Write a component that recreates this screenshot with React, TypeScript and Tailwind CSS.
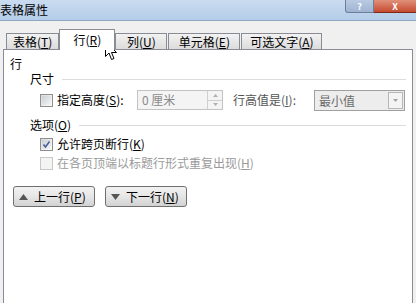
const F = "font-['Noto_Sans_CJK_SC','Noto_Sans',sans-serif]";

function U({ c }: { c: string }) {
  return (
    <span>
      (<span className="underline underline-offset-1">{c}</span>)
    </span>
  );
}

function Tab({ label, k, active }: { label: string; k: string; active?: boolean }) {
  if (active) {
    return (
      <div className="relative z-10 -mb-px flex h-[21px] w-[56px] items-center justify-center border border-b-0 border-[#898c95] bg-white text-[12px] text-black">
        {label}
        <U c={k} />
      </div>
    );
  }
  return (
    <div className="flex h-[16px] items-center justify-center border border-b-0 border-[#898c95] bg-gradient-to-b from-[#f2f2f2] to-[#dcdcdc] px-[6px] text-[12px] text-black">
      {label}
      <U c={k} />
    </div>
  );
}

function Section({ label, k }: { label: string; k?: string }) {
  return (
    <div className="flex items-center pl-[26px] text-[12px] leading-[14px] text-black">
      <span>
        {label}
        {k && <U c={k} />}
      </span>
      <div className="ml-[8px] h-px flex-1 bg-[#dcdcdc]" />
    </div>
  );
}

function Check({ checked, disabled }: { checked?: boolean; disabled?: boolean }) {
  return (
    <div
      className={`flex h-[13px] w-[13px] items-center justify-center border ${
        disabled ? "border-[#c8c8c8] bg-[#f4f4f4]" : "border-[#8e8f8f] bg-gradient-to-br from-[#dcdcdc] to-[#fbfbfb]"
      }`}
    >
      <div className={`flex h-[9px] w-[9px] items-center justify-center ${disabled ? "" : "bg-gradient-to-br from-[#cbcfd5] to-[#f6f6f6]"}`}>
        {checked && (
          <svg width="9" height="9" viewBox="0 0 9 9">
            <path d="M1.5 4.5 L3.5 7 L7.5 1.5" fill="none" stroke="#4a5f97" strokeWidth="1.6" />
          </svg>
        )}
      </div>
    </div>
  );
}

function NavButton({ up, label, k }: { up?: boolean; label: string; k: string }) {
  return (
    <div className="flex h-[21px] w-[82px] items-center rounded-[3px] border border-[#707070] bg-gradient-to-b from-[#f2f2f2] via-[#e6e6e6] to-[#d2d2d2] pl-[5px] text-[12px] text-black">
      <svg width="9" height="6" viewBox="0 0 9 6" className="mr-[6px]">
        {up ? <path d="M0 6 L4.5 0 L9 6 Z" fill="#555" /> : <path d="M0 0 L4.5 6 L9 0 Z" fill="#555" />}
      </svg>
      {label}
      <U c={k} />
    </div>
  );
}

export default function App() {
  return (
    <div className={`relative h-[303px] w-[416px] overflow-hidden bg-[#f0f0f0] ${F}`}>
      {/* Title bar */}
      <div className="flex h-[21px] items-center justify-between border-b border-[#8ea6c4] bg-gradient-to-b from-[#c9dbef] to-[#b5cde9]">
        <span className="text-[12px] leading-none text-black">表格属性</span>
        <div className="flex self-start">
          <div className="flex h-[13px] w-[29px] items-center justify-center rounded-bl-[3px] border border-t-0 border-[#6d7f99] bg-gradient-to-b from-[#b9cbe2] to-[#9fb4d2] text-[9px] font-bold leading-none text-white">
            ?
          </div>
          <div className="flex h-[13px] w-[42px] items-center justify-center border-b border-[#7a2a1a] bg-gradient-to-b from-[#e0907a] to-[#c44a2e] text-[9px] font-bold leading-none text-white">
            X
          </div>
        </div>
      </div>

      {/* Tabs */}
      <div className="mt-[7px] flex h-[21px] items-end pl-[6px]">
        <Tab label="表格" k="T" />
        <Tab label="行" k="R" active />
        <div className="flex">
          <div className="w-[52px]">
            <Tab label="列" k="U" />
          </div>
          <div className="ml-px w-[72px]">
            <Tab label="单元格" k="E" />
          </div>
          <div className="ml-px w-[81px]">
            <Tab label="可选文字" k="A" />
          </div>
        </div>
      </div>

      {/* Panel */}
      <div className="ml-[3px] h-[260px] w-[410px] border border-[#898c95] bg-white pr-[6px] pt-[7px]">
        <div className="pl-[6px] text-[12px] leading-[14px] text-black">行</div>

        <div className="mt-[1px]">
          <Section label="尺寸" />
        </div>

        <div className="mt-[4px] flex h-[20px] items-center pl-[36px] text-[12px] text-black">
          <Check />
          <span className="ml-[4px] w-[80px]">
            指定高度<U c="S" />:
          </span>
          <div className="flex h-[20px] w-[86px] border border-[#c3c3c3] bg-[#f4f4f4]">
            <span className="flex-1 pl-[4px] leading-[18px] text-[#8a8a8a]">0 厘米</span>
            <div className="flex w-[15px] flex-col border-l border-[#d0d0d0]">
              <div className="flex flex-1 items-center justify-center border-b border-[#d0d0d0]">
                <svg width="5" height="3" viewBox="0 0 5 3">
                  <path d="M0 3 L2.5 0 L5 3 Z" fill="#b0b0b0" />
                </svg>
              </div>
              <div className="flex flex-1 items-center justify-center">
                <svg width="5" height="3" viewBox="0 0 5 3">
                  <path d="M0 0 L2.5 3 L5 0 Z" fill="#b0b0b0" />
                </svg>
              </div>
            </div>
          </div>
          <span className="ml-[10px] w-[81px] text-[#555]">
            行高值是<U c="I" />:
          </span>
          <div className="flex h-[21px] w-[91px] border border-[#a0a0a0] bg-[#ededed]">
            <span className="flex-1 pl-[4px] leading-[19px] text-[#6a6a6a]">最小值</span>
            <div className="my-px mr-px flex w-[15px] items-center justify-center border border-[#b8b8b8] bg-[#f4f4f4]">
              <svg width="5" height="3" viewBox="0 0 5 3">
                <path d="M0 0 L2.5 3 L5 0 Z" fill="#a0a0a0" />
              </svg>
            </div>
          </div>
        </div>

        <div className="mt-[8px]">
          <Section label="选项" k="O" />
        </div>

        <div className="mt-[5px] flex items-center pl-[36px] text-[12px] leading-[14px] text-black">
          <Check checked />
          <span className="ml-[4px]">
            允许跨页断行<U c="K" />
          </span>
        </div>
        <div className="mt-[5px] flex items-center pl-[36px] text-[12px] leading-[14px] text-[#9a9a9a]">
          <Check disabled />
          <span className="ml-[4px]">
            在各页顶端以标题行形式重复出现<U c="H" />
          </span>
        </div>

        <div className="mt-[16px] flex gap-[10px] pl-[9px]">
          <NavButton up label="上一行" k="P" />
          <NavButton label="下一行" k="N" />
        </div>
      </div>

      {/* Mouse cursor */}
      <svg className="absolute left-[105px] top-[41px]" width="13" height="20" viewBox="0 0 13 20">
        <path d="M0.5 0.5 L0.5 15.5 L4 12 L6.5 18.5 L9 17.5 L6.5 11.5 L11.5 11.5 Z" fill="white" stroke="black" strokeWidth="1" />
      </svg>
    </div>
  );
}
